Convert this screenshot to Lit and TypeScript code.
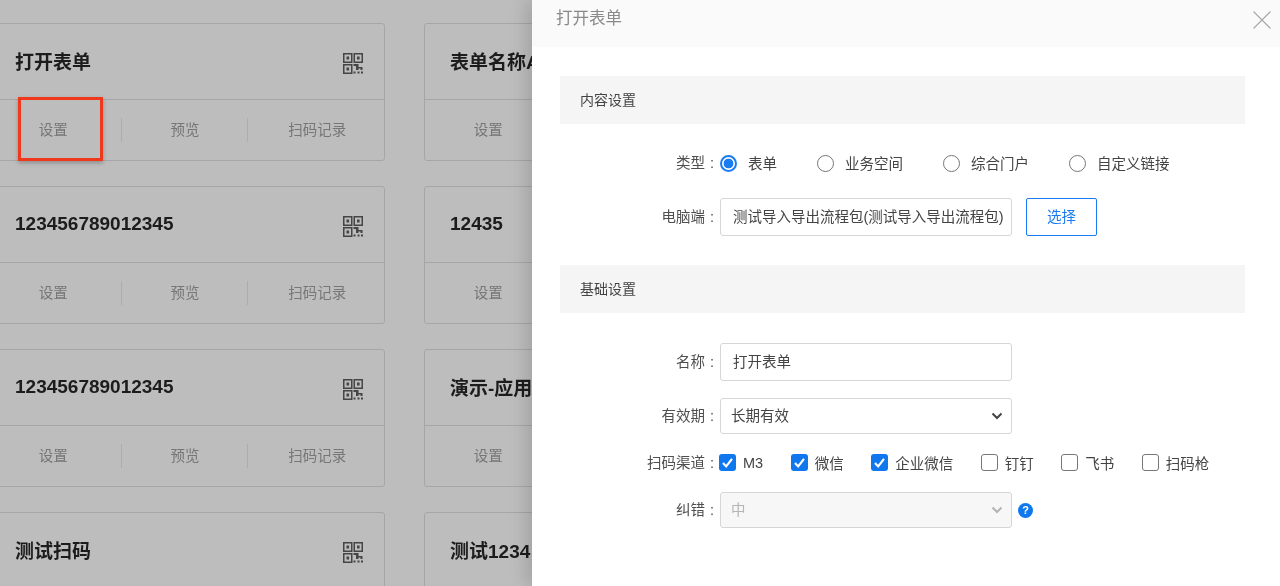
import { LitElement, css, html } from 'lit'
import { customElement } from 'lit/decorators.js'

const cards = [
  ['打开表单', '表单名称A'],
  ['123456789012345', '12435'],
  ['123456789012345', '演示-应用'],
  ['测试扫码', '测试1234'],
].flat()

const radios = [
  { label: '表单', checked: true },
  { label: '业务空间', checked: false },
  { label: '综合门户', checked: false },
  { label: '自定义链接', checked: false },
]

const channels = [
  { label: 'M3', checked: true },
  { label: '微信', checked: true },
  { label: '企业微信', checked: true },
  { label: '钉钉', checked: false },
  { label: '飞书', checked: false },
  { label: '扫码枪', checked: false },
]

const qrIcon = html`
  <svg class="qr" width="20" height="21" viewBox="0 0 20 21" fill="none" stroke="#454545">
    <rect x="0.75" y="0.75" width="8" height="8.5" stroke-width="1.5" />
    <rect x="11.25" y="0.75" width="8" height="8.5" stroke-width="1.5" />
    <rect x="0.75" y="11.75" width="8" height="8.5" stroke-width="1.5" />
    <g fill="#454545" stroke="none">
      <rect x="3.5" y="3.5" width="2.6" height="3" />
      <rect x="14" y="3.5" width="2.6" height="3" />
      <rect x="3.5" y="14.5" width="2.6" height="3" />
      <path d="M10.5 11h5v3h4v3h-2v-1.5h-2V17h-2.5v-4h-2.5z" />
      <rect x="10.5" y="18.5" width="2" height="2" />
      <rect x="14.5" y="18.5" width="2" height="2" />
      <rect x="18" y="18.5" width="2" height="2" />
    </g>
  </svg>
`

const chevron = html`
  <svg width="12" height="8" viewBox="0 0 12 8" fill="none" stroke="currentColor" stroke-width="2">
    <path d="M1.5 1.5 6 6l4.5-4.5" />
  </svg>
`

const label = (text: string) => html`<span class="label">${text}<span class="colon">:</span></span>`

@customElement('app-root')
export class AppRoot extends LitElement {
  render() {
    return html`
      <div class="page">
        <div class="grid">
          ${cards.map(
            (title) => html`
              <div class="card">
                <div class="card-head">
                  <span class="card-title">${title}</span>
                  ${qrIcon}
                </div>
                <div class="card-actions">
                  <span class="action first">设置</span>
                  <span class="action middle">预览</span>
                  <span class="action last">扫码记录</span>
                </div>
              </div>
            `
          )}
        </div>
        <div class="highlight"></div>
        <aside class="drawer">
          <header class="drawer-head">
            <span>打开表单</span>
            <svg class="close" width="20" height="20" viewBox="0 0 20 20" stroke="#a8a8a8" stroke-width="1.1">
              <path d="M1.5 1.5l17 17M18.5 1.5l-17 17" />
            </svg>
          </header>
          <div class="drawer-body">
            <div class="section">内容设置</div>
            <div class="row radio-row">
              ${label('类型')}
              <div class="options radios">
                ${radios.map(
                  (r) => html`
                    <label class="option">
                      <input type="radio" name="type" ?checked=${r.checked} />
                      <span>${r.label}</span>
                    </label>
                  `
                )}
              </div>
            </div>
            <div class="row pc-row">
              ${label('电脑端')}
              <div class="field"><span>测试导入导出流程包(测试导入导出流程包)</span></div>
              <button class="pick"><span>选择</span></button>
            </div>
            <div class="section second">基础设置</div>
            <div class="row name-row">
              ${label('名称')}
              <div class="field"><span>打开表单</span></div>
            </div>
            <div class="row period-row">
              ${label('有效期')}
              <div class="select"><span>长期有效</span> ${chevron}</div>
            </div>
            <div class="row channel-row">
              ${label('扫码渠道')}
              <div class="options checks">
                ${channels.map(
                  (c) => html`
                    <label class="option">
                      <input type="checkbox" ?checked=${c.checked} />
                      <span>${c.label}</span>
                    </label>
                  `
                )}
              </div>
            </div>
            <div class="row level-row">
              ${label('纠错')}
              <div class="select disabled"><span>中</span> ${chevron}</div>
              <span class="help">?</span>
            </div>
          </div>
        </aside>
      </div>
    `
  }

  static styles = css`
    :host {
      display: block;
      font-family: 'Liberation Sans', 'Noto Sans CJK SC', sans-serif;
      font-size: 14.5px;
    }

    * {
      box-sizing: border-box;
    }

    .page {
      position: relative;
      height: 586px;
      overflow: hidden;
      background: #bdbdbd;
      filter: blur(0.45px);
    }

    .grid {
      display: grid;
      grid-template-columns: 396px 396px;
      column-gap: 39px;
      row-gap: 25px;
      margin-left: -11px;
      padding-top: 23px;
    }

    .card {
      height: 138px;
      border: 1px solid #a6a6a6;
      border-radius: 3px;
    }

    .card-head {
      display: flex;
      align-items: center;
      justify-content: space-between;
      height: 76px;
      padding: 0 21px 2px 25px;
      border-bottom: 1px solid #a6a6a6;
    }

    .card-title {
      font-size: 19px;
      font-weight: 600;
      color: #1c1c1c;
      white-space: nowrap;
    }

    .qr {
      margin-top: 6px;
    }

    .card-actions {
      display: flex;
      align-items: center;
      height: 60px;
      color: #767676;
    }

    .action {
      height: 24px;
      line-height: 24px;
      text-align: center;
    }

    .first {
      width: 131px;
      padding-right: 4px;
    }

    .middle {
      width: 127px;
      padding-left: 1px;
      border-left: 1px solid #adadad;
    }

    .last {
      width: 137px;
      padding-left: 2px;
      border-left: 1px solid #adadad;
    }

    .highlight {
      position: absolute;
      left: 18px;
      top: 97px;
      width: 85px;
      height: 64px;
      border: 3px solid #f0391c;
      box-shadow: 0 2px 4px rgba(0, 0, 0, 0.25);
    }

    .drawer {
      position: absolute;
      top: 0;
      bottom: 0;
      left: 532px;
      right: 0;
      background: #fff;
      box-shadow: -6px 0 16px rgba(0, 0, 0, 0.14);
      color: #444;
    }

    .drawer-head {
      display: flex;
      justify-content: space-between;
      height: 47px;
      padding: 5px 8px 0 24px;
      background: #fafafa;
      color: #8a8a8a;
      font-size: 16.5px;
    }

    .close {
      margin-top: 5px;
    }

    .drawer-body {
      padding: 29px 35px 0 28px;
    }

    .section {
      height: 48px;
      line-height: 48px;
      padding-left: 20px;
      background: #f5f5f5;
      color: #444;
      font-size: 14px;
    }

    .section.second {
      margin-top: 29px;
    }

    .row {
      display: flex;
      align-items: center;
    }

    .label {
      flex: none;
      width: 159px;
      padding: 0 5px 3px 0;
      color: #4e4e4e;
      text-align: right;
    }

    .colon {
      margin-left: 5px;
    }

    .radio-row {
      height: 38px;
      margin-top: 20px;
    }

    .pc-row {
      margin-top: 16px;
    }

    .name-row {
      margin-top: 30px;
    }

    .period-row {
      margin-top: 17px;
    }

    .channel-row {
      height: 22px;
      margin-top: 18px;
    }

    .level-row {
      margin-top: 18px;
    }

    .field,
    .select {
      display: flex;
      align-items: center;
      flex: none;
      width: 292px;
      margin-left: 1px;
      border: 1px solid #d6d6d6;
      border-radius: 3px;
      background: #fff;
      color: #444;
      white-space: nowrap;
    }

    .field {
      height: 38px;
      padding: 0 0 3px 12px;
    }

    .select {
      justify-content: space-between;
      height: 36px;
      padding: 0 8px 0 10px;
    }

    .select span {
      margin-bottom: 4px;
    }

    .select.disabled {
      background: #f7f7f7;
      color: #b4b4b4;
    }

    .pick {
      width: 71px;
      height: 38px;
      margin-left: 14px;
      padding: 0 0 3px;
      border: 1px solid #1a7cf0;
      border-radius: 2px;
      background: #fff;
      color: #1a7cf0;
      font: inherit;
    }

    .help {
      width: 15px;
      height: 15px;
      margin-left: 6px;
      border-radius: 50%;
      background: #0f78ee;
      color: #fff;
      font-size: 11px;
      font-weight: 700;
      line-height: 15px;
      text-align: center;
    }

    .options {
      display: flex;
      align-items: center;
      margin-bottom: 1px;
    }

    .radios {
      gap: 39px;
    }

    .checks {
      gap: 27.5px;
    }

    .option {
      display: flex;
      align-items: center;
      color: #444;
    }

    input {
      flex: none;
      appearance: none;
      margin: 0;
      background: #fff;
    }

    input[type='radio'] {
      width: 17px;
      height: 17px;
      margin: 2px 11px 0 1px;
      border: 1px solid #767676;
      border-radius: 50%;
    }

    input[type='radio']:checked {
      border: 2px solid #1a7cf0;
      background: radial-gradient(circle, #1a7cf0 0 4.6px, #fff 5.2px);
    }

    input[type='checkbox'] {
      width: 17px;
      height: 17px;
      margin-right: 7px;
      border: 1px solid #767676;
      border-radius: 3px;
    }

    input[type='checkbox']:checked {
      border: none;
      background: #0f78ee
        url("data:image/svg+xml,%3Csvg xmlns='http://www.w3.org/2000/svg' viewBox='0 0 17 17'%3E%3Cpath d='M4 9l3.2 3.4L13 4.8' fill='none' stroke='%23fff' stroke-width='2.2'/%3E%3C/svg%3E");
    }
  `
}

declare global {
  interface HTMLElementTagNameMap {
    'app-root': AppRoot
  }
}
